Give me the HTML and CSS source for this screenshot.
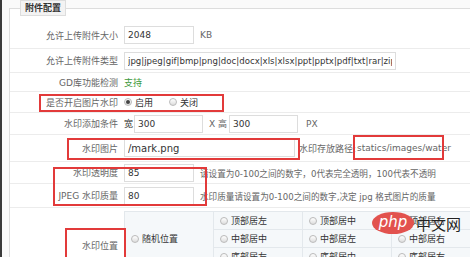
FILE: index.html
```html
<!DOCTYPE html>
<html lang="zh-CN">
<head>
    <meta charset="UTF-8">
    <meta name="viewport" content="width=device-width, initial-scale=1.0">
    <title>附件配置</title>
    <link rel="stylesheet" href="styles.css">
</head>
<body>
    <div class="page">
        <fieldset class="panel">
            <legend>附件配置</legend>
            <div class="form">
                <div class="row h27">
                    <label class="row-label">允许上传附件大小</label>
                    <input type="text" class="input" value="2048">
                    <span class="unit">KB</span>
                </div>
                <div class="row h24">
                    <label class="row-label">允许上传附件类型</label>
                    <input type="text" class="input input-long" value="jpg|jpeg|gif|bmp|png|doc|docx|xls|xlsx|ppt|pptx|pdf|txt|rar|zip|swf">
                </div>
                <div class="row h19">
                    <label class="row-label">GD库功能检测</label>
                    <span class="ok">支持</span>
                </div>
                <div class="row h21">
                    <label class="row-label">是否开启图片水印</label>
                    <label class="choice"><input type="radio" name="watermark" class="radio" checked>启用</label>
                    <label class="choice choice-gap"><input type="radio" name="watermark" class="radio">关闭</label>
                </div>
                <div class="row h22">
                    <label class="row-label">水印添加条件</label>
                    <span class="text">宽</span>
                    <input type="text" class="input input-size" value="300">
                    <span class="text text-x">X 高</span>
                    <input type="text" class="input input-size input-h" value="300">
                    <span class="unit unit-px">PX</span>
                </div>
                <div class="row h27">
                    <label class="row-label">水印图片</label>
                    <input type="text" class="input input-img" value="/mark.png">
                    <span class="note note-path">水印存放路径:</span>
                    <span class="note path">statics/images/water</span>
                </div>
                <div class="row h22">
                    <label class="row-label">水印透明度</label>
                    <input type="text" class="input" value="85">
                    <span class="note">请设置为0-100之间的数字，0代表完全透明，100代表不透明</span>
                </div>
                <div class="row h24">
                    <label class="row-label">JPEG 水印质量</label>
                    <input type="text" class="input" value="80">
                    <span class="note">水印质量请设置为0-100之间的数字,决定 jpg 格式图片的质量</span>
                </div>
                <div class="row row-pos">
                    <label class="row-label">水印位置</label>
                    <table class="pos-table">
                        <tr>
                            <td rowspan="3"><label class="choice"><input type="radio" name="pos" class="radio">随机位置</label></td>
                            <td><label class="choice"><input type="radio" name="pos" class="radio">顶部居左</label></td>
                            <td><label class="choice"><input type="radio" name="pos" class="radio">顶部居中</label></td>
                            <td><label class="choice"><input type="radio" name="pos" class="radio">顶部居右</label></td>
                        </tr>
                        <tr>
                            <td><label class="choice"><input type="radio" name="pos" class="radio">中部居中</label></td>
                            <td><label class="choice"><input type="radio" name="pos" class="radio">中部居左</label></td>
                            <td><label class="choice"><input type="radio" name="pos" class="radio">中部居右</label></td>
                        </tr>
                        <tr>
                            <td><label class="choice"><input type="radio" name="pos" class="radio">底部居左</label></td>
                            <td><label class="choice"><input type="radio" name="pos" class="radio">底部居中</label></td>
                            <td><label class="choice"><input type="radio" name="pos" class="radio">底部居右</label></td>
                        </tr>
                    </table>
                </div>
            </div>
        </fieldset>

        <!-- red highlight boxes drawn over the form -->
        <div class="mark" style="left: 37px; top: 94px; width: 185px; height: 18px;"></div>
        <div class="mark" style="left: 65px; top: 138px; width: 233px; height: 22px;"></div>
        <div class="mark" style="left: 351px; top: 135px; width: 91px; height: 25px;"></div>
        <div class="mark" style="left: 51px; top: 167px; width: 154px; height: 39px;"></div>
        <div class="mark" style="left: 63px; top: 228px; width: 61px; height: 40px;"></div>

        <div class="logo">
            <span class="logo-php">php</span>
            <span class="logo-cn">中文网</span>
        </div>
    </div>
</body>
</html>
```

FILE: styles.css
```css
html, body {
    margin: 0;
    padding: 0;
    background-color: #fff;
    overflow: hidden;
}
body {
    font-family: "DejaVu Sans", "Noto Sans CJK SC", sans-serif;
    font-size: 9px;
    color: #666;
}
.page {
    position: relative;
    height: 257px;
    border-left: 2px solid #3a3a3a;
    padding-left: 7px;
    background-color: #fafafa;
}
.panel {
    width: 520px;
    margin: 0;
    padding: 0;
    border: 1px solid #ddd;
    background-color: #fff;
}
.panel legend {
    margin-left: 10px;
    padding: 0 4px;
    height: 16px;
    box-sizing: border-box;
    line-height: 14px;
    border: 1px solid #ddd;
    background-color: #f3f3f3;
    color: #333;
    font-weight: bold;
}
.form {
    margin-top: 6px;
}
.row {
    display: flex;
    align-items: center;
    box-sizing: border-box;
    border-bottom: 1px solid #ececec;
}
.h19 { height: 19px; }
.h21 { height: 21px; }
.h22 { height: 22px; }
.h24 { height: 24px; }
.h27 { height: 27px; }
.row-label {
    width: 114px;
    flex-shrink: 0;
    padding-right: 6px;
    box-sizing: border-box;
    text-align: right;
    color: #666;
}
.input {
    width: 70px;
    height: 18px;
    box-sizing: border-box;
    padding: 0 3px;
    border: 1px solid #ddd;
    font-family: "DejaVu Sans", sans-serif;
    font-size: 9px;
    color: #333;
    background: #fff;
}
.input-long {
    width: 272px;
    font-size: 8.6px;
}
.input-size {
    width: 69px;
    margin-left: 1px;
}
.input-h {
    margin-left: 2px;
}
.input-img {
    width: 171px;
    font-size: 10px;
}
.unit {
    margin-left: 6px;
    color: #666;
}
.unit-px {
    margin-left: 8px;
}
.text {
    color: #333;
}
.text-x {
    margin-left: 6px;
    color: #666;
}
.ok {
    color: #3d9a3d;
}
.note {
    margin-left: 6px;
    color: #666;
    font-size: 8.6px;
    white-space: nowrap;
}
.note-path {
    margin-left: 4px;
    font-size: 9px;
}
.path {
    margin-left: 1px;
    font-size: 9px;
}
.choice {
    display: flex;
    align-items: center;
    color: #333;
    white-space: nowrap;
}
.choice-gap {
    margin-left: 16px;
}
.radio {
    appearance: none;
    -webkit-appearance: none;
    width: 8px;
    height: 8px;
    margin: 0 3px 0 0;
    border: 1px solid #bbb;
    border-radius: 50%;
    background: linear-gradient(#fff, #ddd);
    position: relative;
}
.radio:checked::after {
    content: "";
    position: absolute;
    left: 1px;
    top: 1px;
    width: 4px;
    height: 4px;
    border-radius: 50%;
    background: #444;
}
.row-pos {
    align-items: flex-start;
    border-bottom: none;
    padding-top: 3px;
}
.row-pos .row-label {
    padding-top: 28px;
}
.pos-table {
    border-collapse: collapse;
    background-color: #f5f8fa;
    border: 1px solid #e3e8ec;
}
.pos-table td {
    width: 89px;
    height: 18px;
    padding: 0 0 0 6px;
    box-sizing: border-box;
    border: 1px solid #e3e8ec;
}
.mark {
    position: absolute;
    box-sizing: border-box;
    border: 2px solid #e23a3a;
}
.logo {
    position: absolute;
    left: 370px;
    top: 212px;
    display: flex;
    align-items: center;
}
.logo-php {
    width: 42px;
    height: 22px;
    border-radius: 50%;
    background-color: #e2524e;
    color: #fff;
    font-family: "DejaVu Sans", sans-serif;
    font-size: 15px;
    font-style: italic;
    line-height: 20px;
    text-align: center;
}
.logo-cn {
    margin-left: 2px;
    font-family: "Noto Sans CJK SC", sans-serif;
    font-size: 15px;
    color: #222;
    text-shadow: 0 0 2px #fff;
}
```
